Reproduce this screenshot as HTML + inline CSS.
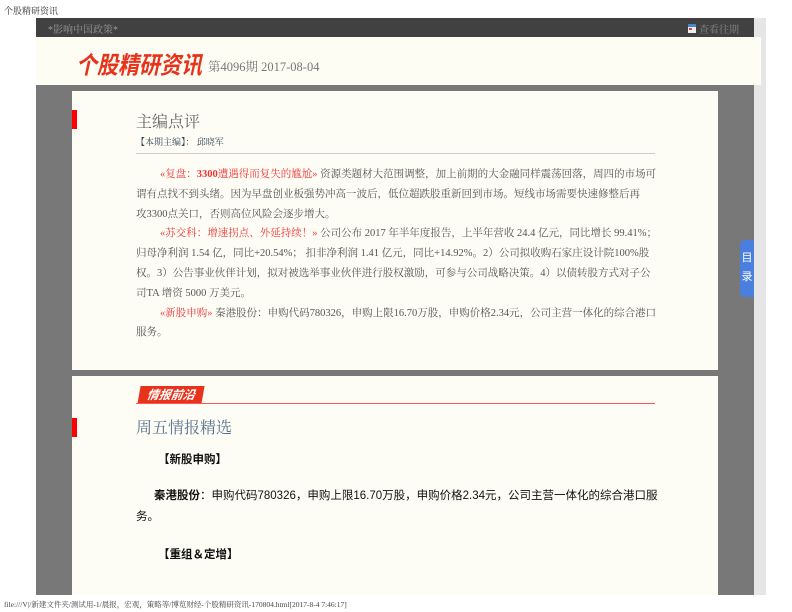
<!DOCTYPE html>
<html><head><meta charset="utf-8"><style>
*{margin:0;padding:0;box-sizing:border-box}
body{width:792px;height:612px;background:#fff;position:relative;overflow:hidden;font-family:"Liberation Serif","Noto Serif CJK SC",serif;}
.a{position:absolute}
.p{font-size:10.5px;line-height:19.8px;color:#555;text-indent:24px}
.r{color:#e33}
.s{font-family:"Liberation Sans","Noto Sans CJK SC",sans-serif}
</style></head><body>
<div class="a" style="left:4px;top:4px;font-size:9px;color:#333">个股精研资讯</div>
<div class="a" style="left:754px;top:18px;width:12px;height:577px;background:#e6e6e6"></div>
<div class="a" style="left:36px;top:18px;width:718px;height:19px;background:#414141"></div>
<div class="a" style="left:48px;top:21px;font-size:10px;color:#999">*影响中国政策*</div>
<div class="a" style="left:688px;top:24px;width:8px;height:9px;background:#eee;border-top:3px solid #48c"><div style="width:3px;height:2px;background:#d44;margin:1px"></div></div>
<div class="a" style="left:699px;top:21px;font-size:10px;color:#888">查看往期</div>
<div class="a" style="left:36px;top:37px;width:725px;height:48px;background:#fdfdf4"></div>
<div class="a s" style="left:76px;top:47px;font-size:21px;font-weight:bold;font-style:italic;color:#e8331c;transform:scaleY(1.15);transform-origin:left top">个股精研资讯</div>
<div class="a" style="left:208px;top:57px;font-size:12.5px;color:#777">第4096期 2017-08-04</div>
<div class="a" style="left:36px;top:85px;width:718px;height:510px;background:#787878"></div>
<div class="a" style="left:72px;top:91px;width:646px;height:279px;background:#fdfdf6"></div>
<div class="a" style="left:72px;top:110px;width:5px;height:19px;background:#f00"></div>
<div class="a" style="left:136px;top:109px;font-size:16px;color:#666">主编点评</div>
<div class="a" style="left:136px;top:135px;font-size:9px;color:#345">【本期主编】： 邱晓军</div>
<div class="a" style="left:136px;top:153px;width:519px;height:1px;background:#ccc"></div>
<div class="a" style="left:136px;top:165px;width:525px">
<p class="p"><span class="r">«复盘：<b>3300</b>遭遇得而复失的尴尬»</span> 资源类题材大范围调整，加上前期的大金融同样震荡回落，周四的市场可谓有点找不到头绪。因为早盘创业板强势冲高一波后，低位超跌股重新回到市场。短线市场需要快速修整后再<br>攻3300点关口，否则高位风险会逐步增大。</p>
<p class="p"><span class="r">«苏交科：增速拐点、外延持续！»</span> 公司公布 2017 年半年度报告，上半年营收 24.4 亿元，同比增长 99.41%；<br>归母净利润 1.54 亿，同比+20.54%； 扣非净利润 1.41 亿元，同比+14.92%。2）公司拟收购石家庄设计院100%股<br>权。3）公告事业伙伴计划，拟对被选举事业伙伴进行股权激励，可参与公司战略决策。4）以债转股方式对子公<br>司TA 增资 5000 万美元。</p>
<p class="p"><span class="r">«新股申购»</span> 秦港股份：申购代码780326，申购上限16.70万股，申购价格2.34元，公司主营一体化的综合港口<br>服务。</p>
</div>
<div class="a" style="left:72px;top:376px;width:646px;height:219px;background:#fdfdf6"></div>
<div class="a s" style="left:139px;top:386px;width:64px;height:18px;background:#e8331c;transform:skewX(-10deg);color:#fff;font-size:12px;font-weight:bold;font-style:italic;line-height:18px;text-align:center">情报前沿</div>
<div class="a" style="left:136px;top:403px;width:519px;height:1px;background:#f55"></div>
<div class="a" style="left:72px;top:418px;width:5px;height:19px;background:#f00"></div>
<div class="a" style="left:136px;top:415px;font-size:16px;color:#5a7090">周五情报精选</div>
<div class="a s" style="left:158px;top:451px;font-size:11.5px;font-weight:bold;color:#111">【新股申购】</div>
<div class="a s" style="left:136px;top:486px;width:530px;font-size:11.5px;line-height:21px;color:#111;text-indent:18px"><b>秦港股份</b>：申购代码780326，申购上限16.70万股，申购价格2.34元，公司主营一体化的综合港口服<br>务。</div>
<div class="a s" style="left:158px;top:546px;font-size:11.5px;font-weight:bold;color:#111">【重组＆定增】</div>
<div class="a s" style="left:740px;top:240px;width:14px;height:57px;background:#4a7fe0;border-radius:5px 0 0 5px;color:#fff;font-size:11px;line-height:19px;text-align:center;padding-top:9px">目<br>录</div>
<div class="a" style="left:4px;top:599px;font-size:7.5px;color:#444">file:///V|/新建文件夹/测试用-1/晨报，宏观，策略等/博览财经-个股精研资讯-170804.html[2017-8-4 7:46:17]</div>
</body></html>
